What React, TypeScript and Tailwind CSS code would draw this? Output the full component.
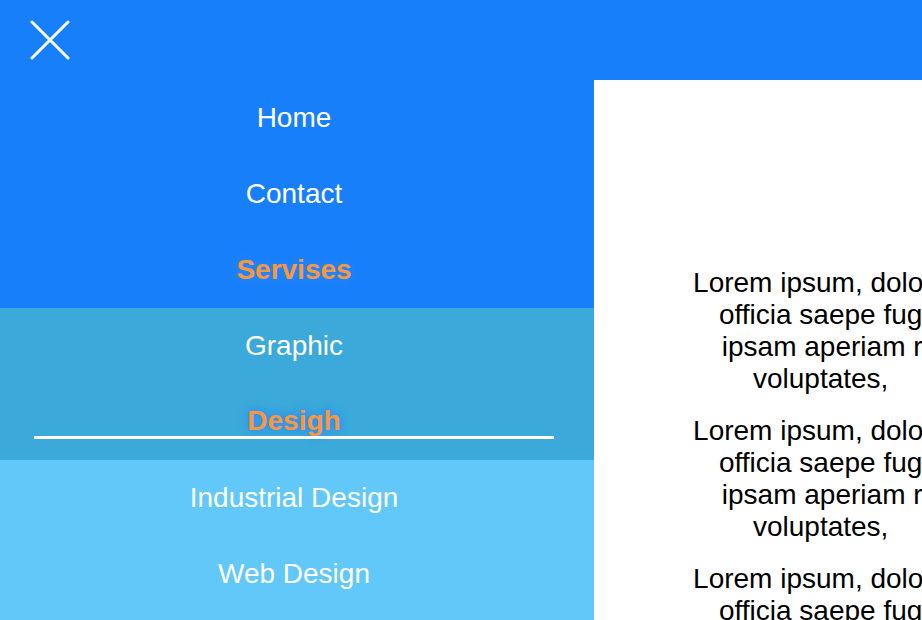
import React from "react";

const paragraph = [
  "Lorem ipsum, dolor sit amet consectetur adipisicing elit.",
  "officia saepe fugit quas, nostrum distinctio dolore ut",
  "ipsam aperiam recusandae quidem molestias nulla",
  "voluptates,\u00a0\u00a0\u00a0\u00a0\u00a0sapiente quaerat deleniti rerum.",
];

const NavItem = ({ label, active }: { label: string; active?: boolean }) => (
  <li className="h-[76px] flex items-center justify-center">
    <a
      href="#"
      className={
        active
          ? "text-[#f9973a] font-bold [text-shadow:0_0_8px_#2f8cff]"
          : "text-white"
      }
    >
      {label}
    </a>
  </li>
);

const App = () => {
  return (
    <div className="w-[922px] h-[620px] overflow-hidden bg-white font-['Liberation_Sans',Arial,sans-serif] text-[28px]">
      <header className="h-[80px] bg-[#187ffb] flex items-center px-[30px]">
        <button className="w-[40px] h-[40px]" aria-label="close">
          <svg viewBox="0 0 40 40" className="w-[40px] h-[40px]">
            <path d="M2 2 L38 38 M38 2 L2 38" stroke="white" strokeWidth="3" strokeLinecap="round" fill="none" />
          </svg>
        </button>
      </header>

      <div className="flex">
        <nav className="w-[594px] shrink-0 pr-[6px] bg-[#61c8f9]">
          <ul className="bg-[#187ffb] -mr-[6px] pr-[6px]">
            <NavItem label="Home" />
            <NavItem label="Contact" />
            <NavItem label="Servises" active />
          </ul>
          <ul className="bg-[#3ba9d9] -mr-[6px] pr-[6px]">
            <NavItem label="Graphic" />
            <li className="h-[76px] flex flex-col items-center justify-end">
              <a href="#" className="text-[#f9973a] font-bold leading-[32px] [text-shadow:0_0_6px_#2f8cff,0_0_10px_#2f8cff]">
                Desigh
              </a>
              <div className="w-[520px] h-[3px] bg-white -mt-[1px] mb-[21px]" />
            </li>
          </ul>
          <ul>
            <NavItem label="Industrial Design" />
            <NavItem label="Web Design" />
          </ul>
        </nav>

        <main className="w-[886px] shrink-0 pt-[187px] text-black text-center leading-[32px]">
          {[0, 1, 2].map((i) => (
            <p key={i} className="mb-[20px] whitespace-nowrap">
              {paragraph.map((line, j) => (
                <React.Fragment key={j}>
                  {line}
                  {j < paragraph.length - 1 && <br />}
                </React.Fragment>
              ))}
            </p>
          ))}
        </main>
      </div>
    </div>
  );
};

export default App;
